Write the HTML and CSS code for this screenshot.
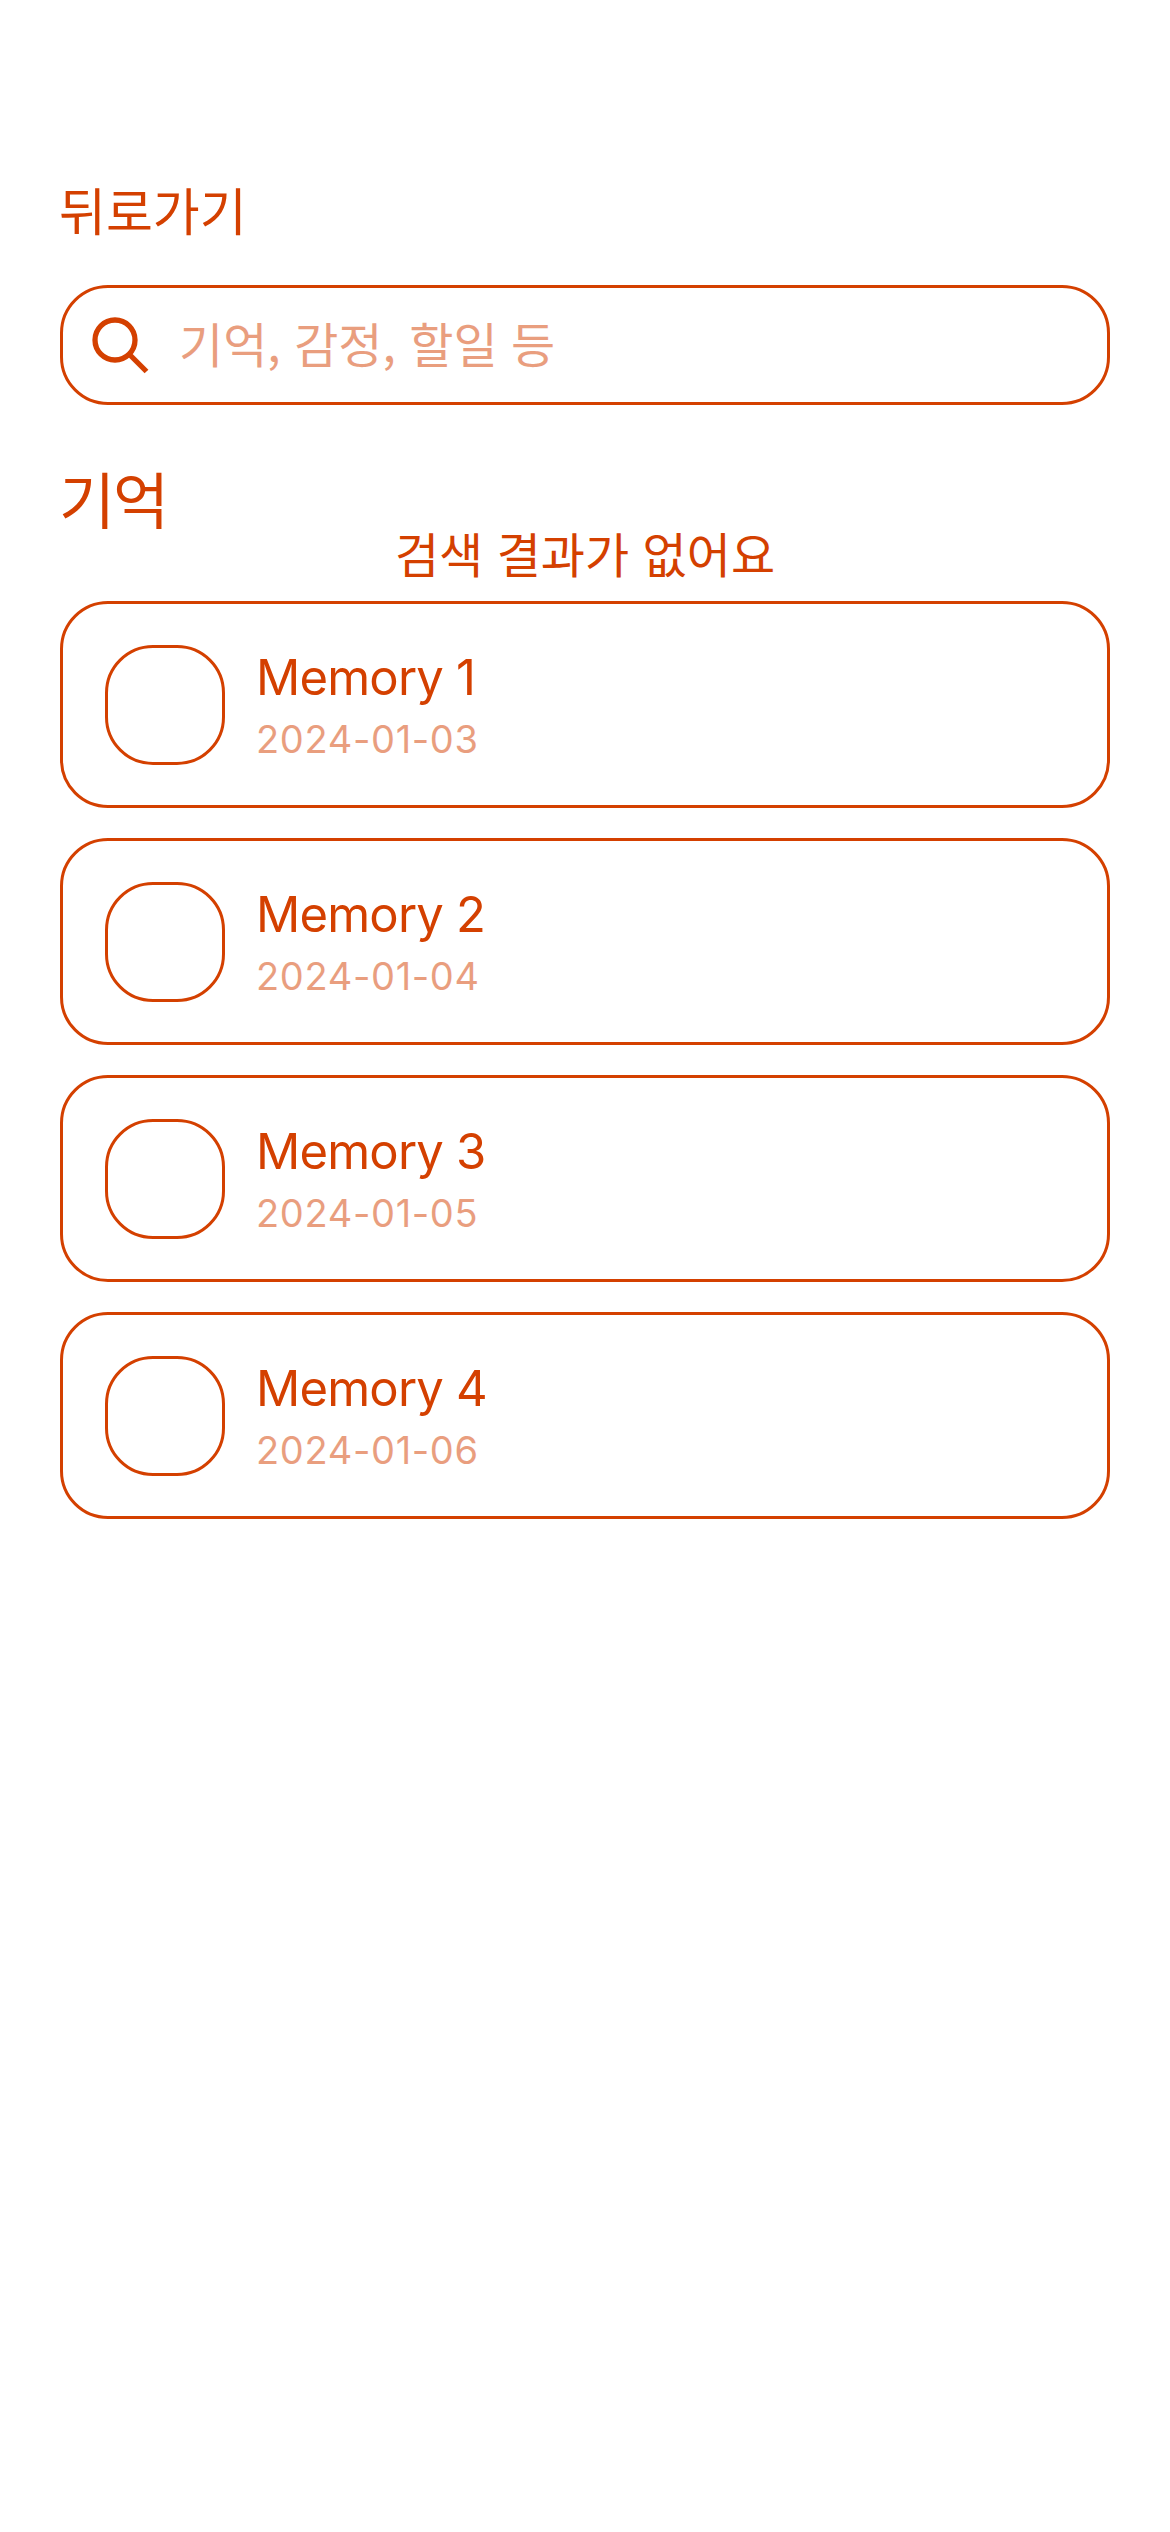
FILE: index.html
```html
<!DOCTYPE html>
<html lang="ko">
<head>
<meta charset="utf-8">
<title>기억</title>
<link rel="stylesheet" href="styles.css">
</head>
<body>
<main class="screen">
  <a class="back">뒤로가기</a>
  <div class="search">
    <svg class="search-icon" viewBox="0 0 60 60" fill="none" stroke="currentColor" stroke-width="5.3">
      <circle cx="25" cy="25" r="20"/>
      <path d="M39 39L56.5 56.5"/>
    </svg>
    <span class="placeholder">기억, 감정, 할일 등</span>
  </div>
  <h1 class="section-title">기억</h1>
  <p class="empty">검색 결과가 없어요</p>
  <ul class="list">
    <li class="card"><div class="thumb"></div><div class="info"><span class="name">Memory 1</span><span class="date">2024-01-03</span></div></li>
    <li class="card"><div class="thumb"></div><div class="info"><span class="name">Memory 2</span><span class="date">2024-01-04</span></div></li>
    <li class="card"><div class="thumb"></div><div class="info"><span class="name">Memory 3</span><span class="date">2024-01-05</span></div></li>
    <li class="card"><div class="thumb"></div><div class="info"><span class="name">Memory 4</span><span class="date">2024-01-06</span></div></li>
  </ul>
</main>
</body>
</html>
```
FILE: styles.css
```css
* { box-sizing: border-box; }
body { margin: 0; background: #fff; }
.screen {
  display: flex;
  flex-direction: column;
  min-height: 2532px;
  padding: 178px 60px 0;
  color: #d44000;
  font-family: "Noto Sans CJK KR", sans-serif;
  font-weight: 400;
}
.back { margin-left: -1px; font-size: 51px; line-height: 62px; white-space: nowrap; }
.search {
  display: flex;
  align-items: center;
  height: 120px;
  margin-top: 45px;
  padding-left: 27px;
  border: 3px solid #d44000;
  border-radius: 48px;
}
.search-icon { width: 60px; height: 60px; }
.placeholder {
  margin: 0 0 6px 29px;
  font-size: 48px;
  line-height: 58px;
  opacity: .5;
  white-space: nowrap;
}
.section-title { margin: 65px 0 0 -1px; font-size: 61px; line-height: 56px; font-weight: 400; letter-spacing: -2px; }
.empty { margin: 2px 0 25px; font-size: 48px; line-height: 48px; text-align: center; }
.list { display: flex; flex-direction: column; gap: 30px; margin: 0; padding: 0; list-style: none; }
.card {
  display: flex;
  gap: 31px;
  height: 207px;
  padding: 41px 42px 0;
  border: 3px solid #d44000;
  border-radius: 48px;
}
.thumb { width: 120px; height: 120px; border: 3px solid #d44000; border-radius: 48px; }
.info { display: flex; flex-direction: column; gap: 6px; padding-top: 2px; font-family: Inter, sans-serif; }
.name { font-size: 49px; line-height: 62px; letter-spacing: -.8px; }
.date { font-size: 38px; line-height: 48px; letter-spacing: .65px; opacity: .5; }
```
